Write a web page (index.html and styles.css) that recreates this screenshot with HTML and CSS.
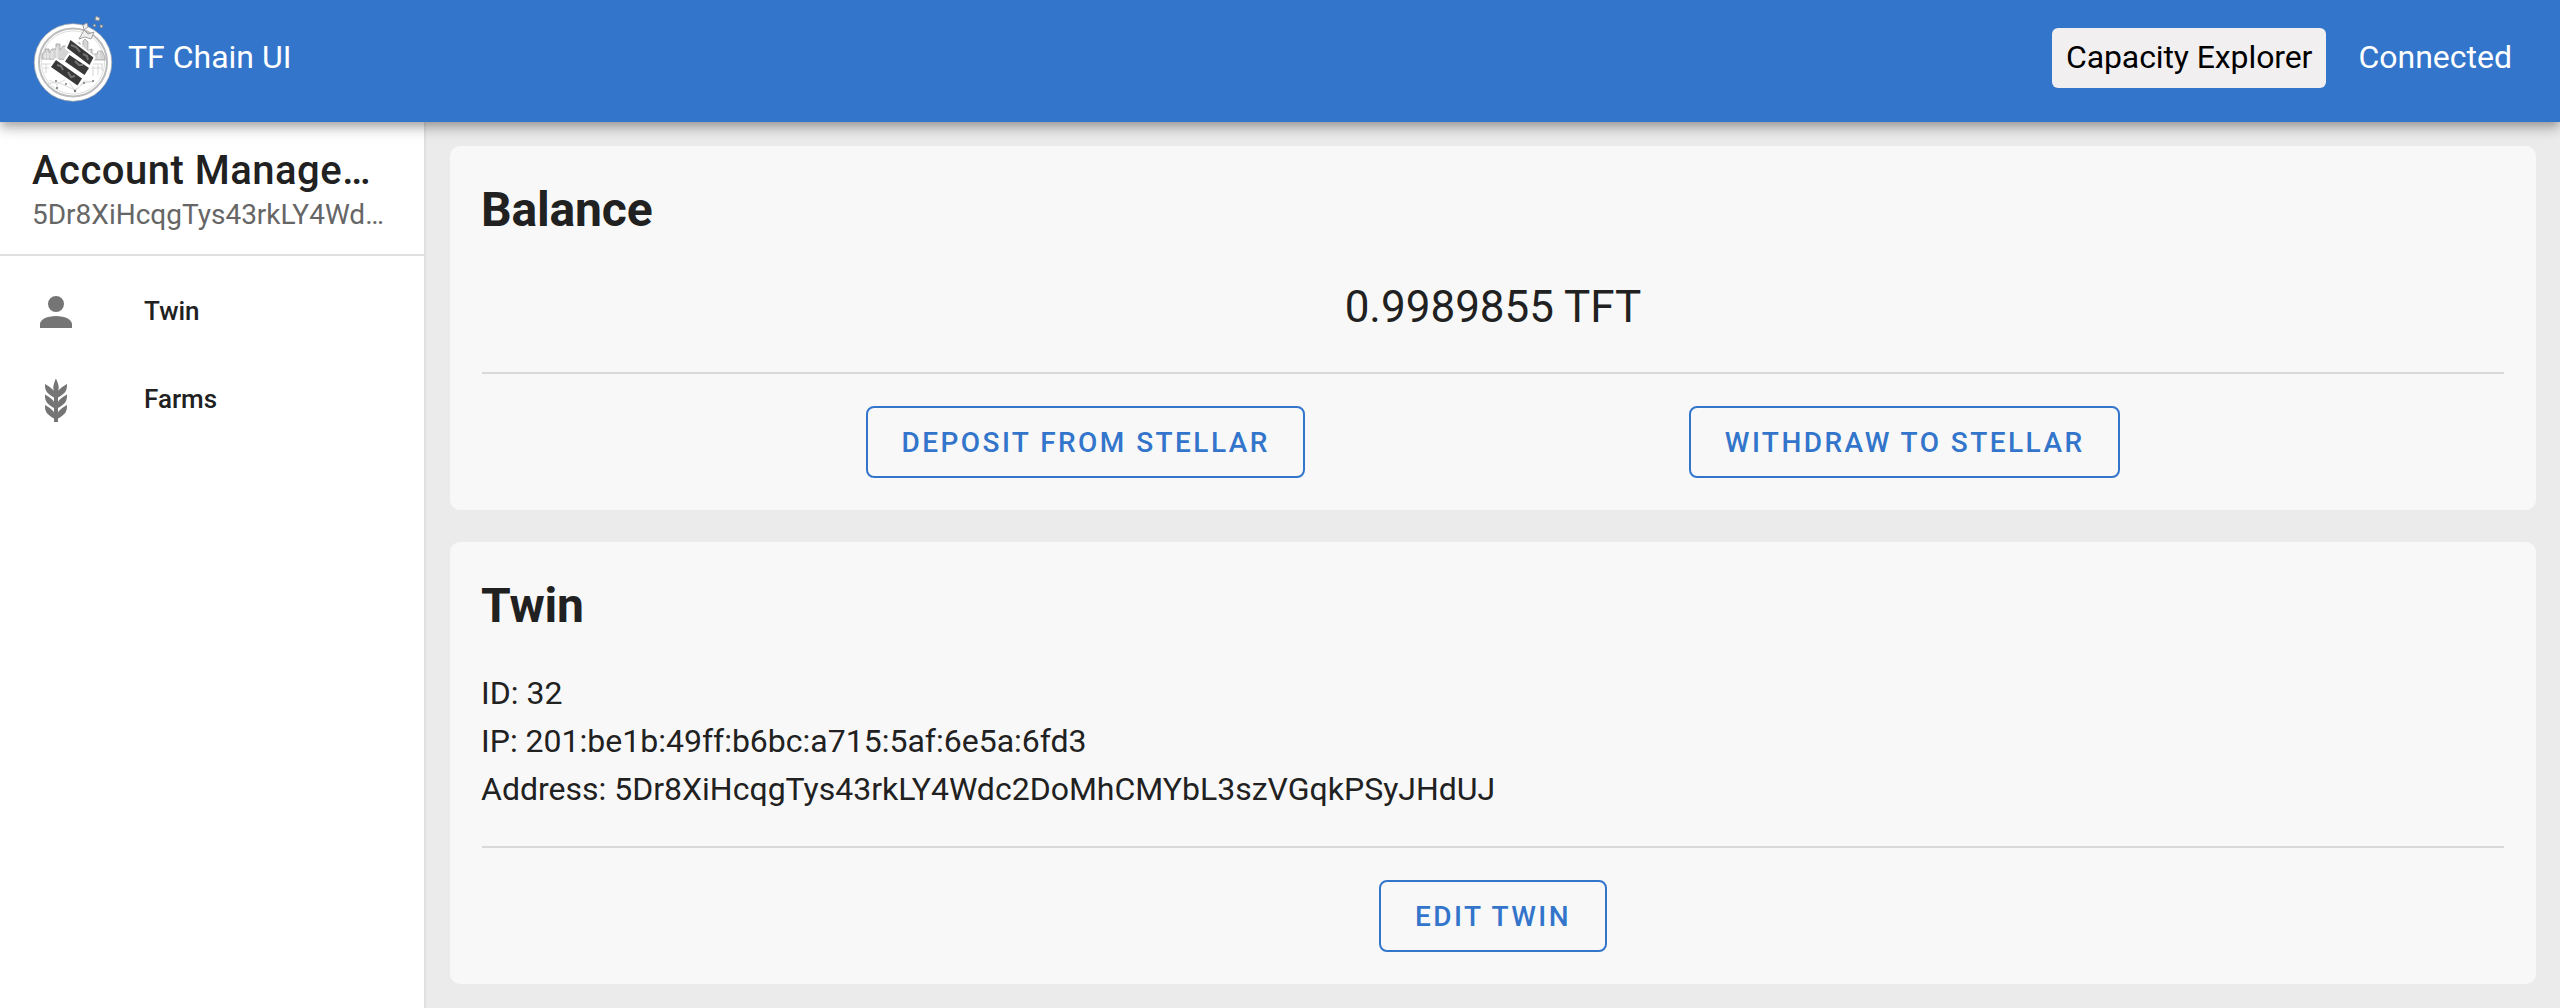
FILE: index.html
```html
<!DOCTYPE html>
<html lang="en">
<head>
<meta charset="utf-8">
<title>TF Chain UI</title>
<link rel="stylesheet" href="styles.css">
</head>
<body>
<header class="app-bar">
  <svg class="logo" viewBox="30 10 88 94" aria-hidden="true">
    <circle cx="73" cy="62.5" r="38.8" fill="#fff" stroke="#a9a9a9" stroke-width=".7"/>
    <circle cx="73" cy="62.5" r="34" fill="#fff" stroke="#bcbcbc" stroke-width="2"/>
    <circle cx="73" cy="62.5" r="31.6" fill="none" stroke="#dedede" stroke-width="1"/>
    <path d="M42 59v-5l3-2v-3h4v4l3-4h4v-5h4v6l3-4h5v-5l4 2h8v4h3v-6l2-2 3 3v8l4-1v5h5l1-3h4l3 6v3z" fill="#d5d5d5" stroke="#a0a0a0" stroke-width=".8"/>
    <path d="M45 53v6m3-7v7m4-8v8m5-12v12m26-14v14m6-15v15m5-10v10m5-8v8" fill="none" stroke="#f2f2f2"/>
    <path d="M42 64h10M43 68h6M46 64v9M93 64h10M92 68h10M93 66v10M98 65v10M102 64v7" fill="none" stroke="#d6d6d6"/>
    <path d="M46 84l11-2 18 8 9-7 10-2M49 80l8 4 10-5 8 12 9-10 9 1M57 84v6M67 79l15 5" fill="none" stroke="#d3d3d3" stroke-width=".8"/>
    <g fill="#777"><circle cx="57" cy="88" r="1.1"/><circle cx="56" cy="81" r="1"/><circle cx="66" cy="84" r="1"/><circle cx="75" cy="91" r="1.2"/><circle cx="84" cy="83" r="1"/><circle cx="93" cy="81" r="1"/></g>
    <g fill="#383838" stroke="#fff" stroke-width="4" stroke-linejoin="round" paint-order="stroke">
      <path d="M70.500 40L93.500 57.500 89.500 65 67 48z"/>
      <path d="M69.500 55L89 68 84.500 75 65 61.500z"/>
      <path d="M56 60L82 78.500 77.500 85.500 51 67z"/>
    </g>
    <path d="M71 45l5 2 4 5M83 54l4 2 1 4M75 61l4 4h4M57 65l4 1 2 4M68 72l3 5 4-1" fill="none" stroke="#747474" stroke-width="2"/>
    <path d="M79 39l5-9 4 4 6-2-3 7-6-2zM84 30l-1-5 4-2 1 4z" fill="#eee" stroke="#999" stroke-width=".9"/>
    <path d="M96 16l4 2-1 3-4-1zM94 24l2 1-1 2-2-1zM100 25l3 0-1 3-2-1z" fill="#ddd" stroke="#777" stroke-width=".7"/>
  </svg>
  <span class="brand">TF Chain UI</span>
  <a class="explorer">Capacity Explorer</a>
  <span class="status">Connected</span>
</header>
<div class="layout">
  <nav class="drawer">
    <div class="account">
      <div class="account-title">Account Management</div>
      <div class="account-address">5Dr8XiHcqgTys43rkLY4Wdc2DoMhCMYbL3szVGqkPSyJHdUJ</div>
    </div>
    <div class="menu">
      <a class="menu-item">
        <svg class="icon" viewBox="0 0 24 24"><path d="M12,4A4,4 0 0,1 16,8A4,4 0 0,1 12,12A4,4 0 0,1 8,8A4,4 0 0,1 12,4M12,14C16.42,14 20,15.79 20,18V20H4V18C4,15.79 7.580,14 12,14Z"/></svg>
        <span class="menu-label">Twin</span>
      </a>
      <a class="menu-item">
        <svg class="icon" viewBox="0 0 24 24"><path d="M7.330,18.330C6.500,17.170 6.500,15.830 6.500,14.500C8.170,15.500 9.830,16.500 10.670,17.670L11,18.230V15.950C9.500,15.050 8.080,14.130 7.330,13.080C6.500,11.920 6.500,10.580 6.500,9.250C8.170,10.250 9.830,11.250 10.670,12.420L11,13V10.700C9.500,9.800 8.080,8.880 7.330,7.830C6.500,6.670 6.500,5.330 6.500,4C8.170,5 9.830,6 10.670,7.170C10.770,7.310 10.860,7.460 10.940,7.620C10.770,7 10.660,6.420 10.650,5.820C10.640,4.310 11.300,2.760 11.960,1.210C12.650,2.690 13.340,4.180 13.350,5.690C13.360,6.320 13.250,6.960 13.070,7.590C13.150,7.450 13.230,7.310 13.330,7.170C14.170,6 15.830,5 17.500,4C17.500,5.330 17.500,6.670 16.670,7.830C15.920,8.880 14.500,9.800 13,10.700V13L13.330,12.420C14.170,11.250 15.830,10.250 17.500,9.250C17.500,10.580 17.500,11.920 16.670,13.080C15.920,14.130 14.500,15.050 13,15.950V18.230L13.330,17.670C14.170,16.500 15.830,15.500 17.500,14.500C17.500,15.830 17.500,17.170 16.670,18.330C15.920,19.380 14.500,20.300 13,21.200V23H11V21.200C9.500,20.300 8.080,19.380 7.330,18.330Z"/></svg>
        <span class="menu-label">Farms</span>
      </a>
    </div>
  </nav>
  <main class="content">
    <section class="card">
      <h2 class="card-title">Balance</h2>
      <p class="amount">0.9989855 TFT</p>
      <div class="actions">
        <button class="btn">DEPOSIT FROM STELLAR</button>
        <button class="btn">WITHDRAW TO STELLAR</button>
      </div>
    </section>
    <section class="card">
      <h2 class="card-title">Twin</h2>
      <div class="details">
        <div>ID: 32</div>
        <div>IP: 201:be1b:49ff:b6bc:a715:5af:6e5a:6fd3</div>
        <div>Address: 5Dr8XiHcqgTys43rkLY4Wdc2DoMhCMYbL3szVGqkPSyJHdUJ</div>
      </div>
      <div class="actions">
        <button class="btn">EDIT TWIN</button>
      </div>
    </section>
  </main>
</div>
</body>
</html>
```
FILE: styles.css
```css
* { box-sizing: border-box; }

body {
  margin: 0;
  height: 1008px;
  display: flex;
  flex-direction: column;
  overflow: hidden;
  background: #ebebeb;
  color: #212121;
  font: 32px/48px Roboto, sans-serif;
}

.app-bar {
  position: relative;
  z-index: 1;
  flex: none;
  height: 122px;
  display: flex;
  align-items: flex-start;
  padding: 28px 48px 0 30px;
  background: #3275cb;
  color: #fff;
  box-shadow: 0 4px 8px -2px rgba(0, 0, 0, .2), 0 8px 10px rgba(0, 0, 0, .14), 0 2px 20px rgba(0, 0, 0, .12);
}

.logo { width: 88px; height: 94px; margin-top: -18px; }
.brand { margin: 5px auto 0 10px; }

.explorer {
  height: 60px;
  padding: 5px 14px 0;
  border-radius: 6px;
  background: #f2eff0;
  color: #000;
  letter-spacing: -.1px;
}

.status { margin: 5px 0 0 32px; }

.layout { flex: 1; display: flex; min-height: 0; }

.drawer {
  flex: none;
  width: 426px;
  border-right: 2px solid #e0e0e0;
  background: #fff;
}

.account {
  height: 134px;
  padding: 25px 32px 0;
  border-bottom: 2px solid #e0e0e0;
}

.account-title,
.account-address {
  overflow: hidden;
  white-space: nowrap;
  text-overflow: ellipsis;
}

.account-title {
  font-size: 40px;
  font-weight: 500;
  line-height: 48px;
  letter-spacing: .5px;
}

.account-address {
  font-size: 28px;
  line-height: 40px;
  color: #666;
}

.menu { padding-top: 12px; }

.menu-item {
  height: 88px;
  display: flex;
  align-items: center;
  gap: 64px;
  padding: 0 32px;
  font-size: 26px;
  font-weight: 500;
}

.menu-label { margin-bottom: 2px; }

.icon { width: 48px; height: 48px; fill: #757575; }

.content {
  flex: 1;
  display: flex;
  flex-direction: column;
  gap: 32px;
  padding: 24px;
}

.card {
  padding: 32px;
  border-radius: 10px;
  background: #f8f8f8;
}

.card-title {
  margin: 0 0 0 -1px;
  font-size: 48px;
  line-height: 64px;
  letter-spacing: -.15px;
}

.amount {
  margin: 32px 0;
  font-size: 44px;
  line-height: 66px;
  text-align: center;
}

.details { margin: 31px 0 33px -1px; }

.actions {
  display: flex;
  justify-content: space-evenly;
  padding-top: 32px;
  border-top: 2px solid #d9d9d9;
}

.btn {
  height: 72px;
  padding: 0 33.500px;
  border: 2px solid #3275cb;
  border-radius: 8px;
  background: transparent;
  color: #3275cb;
  font: 500 28px Roboto, sans-serif;
  letter-spacing: 2.450px;
}
```
